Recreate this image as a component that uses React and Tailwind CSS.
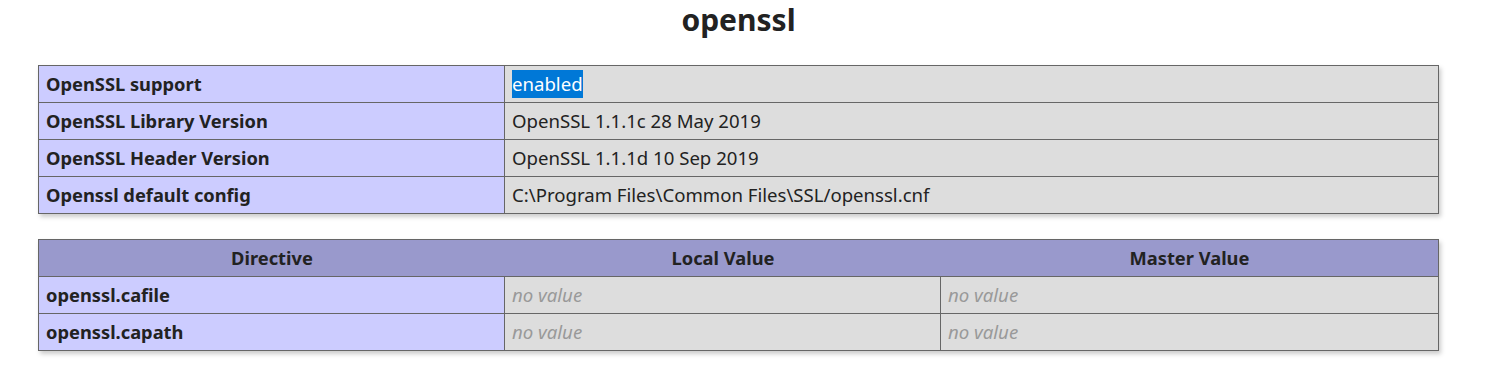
export default function App() {
  const cell = "h-[37px] border-r border-b border-[#666] flex items-center px-[7px] whitespace-nowrap overflow-hidden";
  const e = `${cell} bg-[#ccf] font-bold`;
  const v = `${cell} bg-[#ddd] text-[18.6px]`;
  const nv = <span className="italic text-[#999]">no value</span>;
  return (
    <div className="bg-white min-h-[372px] font-['Noto_Sans','Open_Sans',sans-serif] text-[#222] text-[18.3px]">
      <div className="w-[1401px] ml-[38px]">
        <h2 className="h-[40px] leading-[40px] text-center text-[30px] font-bold mb-[25px]">openssl</h2>
        <div className="grid grid-cols-[466px_1fr] border-l border-t border-[#666] shadow-[1.5px_3px_4.5px_#ccc]">
          <div className={e}>OpenSSL support</div>
          <div className={v}><span className="bg-[#0078d7] text-white">enabled</span></div>
          <div className={e}>OpenSSL Library Version</div>
          <div className={v}>OpenSSL 1.1.1c 28 May 2019</div>
          <div className={e}>OpenSSL Header Version</div>
          <div className={v}>OpenSSL 1.1.1d 10 Sep 2019</div>
          <div className={e}>Openssl default config</div>
          <div className={v}>C:\Program Files\Common Files\SSL/openssl.cnf</div>
        </div>
        <div className="mt-[25px] grid grid-cols-[466px_436px_1fr] border-l border-t border-[#666] shadow-[1.5px_3px_4.5px_#ccc]">
          <div className={`${cell} bg-[#99c] font-bold justify-center border-r-0`}>Directive</div>
          <div className={`${cell} bg-[#99c] font-bold justify-center border-r-0`}>Local Value</div>
          <div className={`${cell} bg-[#99c] font-bold justify-center`}>Master Value</div>
          <div className={e}>openssl.cafile</div>
          <div className={v}>{nv}</div>
          <div className={v}>{nv}</div>
          <div className={e}>openssl.capath</div>
          <div className={v}>{nv}</div>
          <div className={v}>{nv}</div>
        </div>
      </div>
    </div>
  );
}
